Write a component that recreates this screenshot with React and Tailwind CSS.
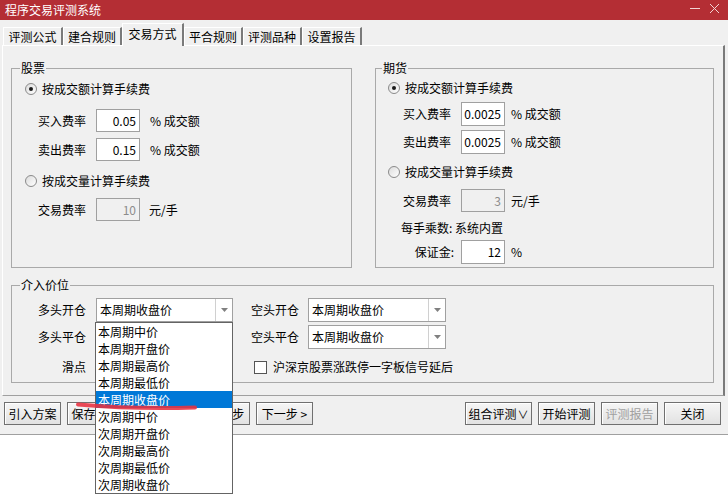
import React from "react";

function Radio({ checked }) {
  return (
    <span className="w-[12px] h-[12px] rounded-full border border-[#8a8a8a] bg-linear-to-br from-[#dcdcdc] to-white flex items-center justify-center shrink-0">
      {checked && <span className="w-[4px] h-[4px] rounded-full bg-[#1a1a1a]" />}
    </span>
  );
}

function Box({ v, disabled, tall }) {
  return (
    <div
      className={
        "w-[44px] border border-[#a0a0a0] flex items-center justify-end pr-[3px] leading-[14px] " +
        (tall ? "h-[24px] " : "h-[23px] ") +
        (disabled ? "bg-[#f0f0f0] text-[#8c8c8c]" : "bg-white text-black")
      }
    >
      {v}
    </div>
  );
}

function FeeRow({ label, value, unit, disabled, tall, mt, left, unitMl }) {
  return (
    <div className={"flex items-center " + mt + " " + left}>
      <span className="w-[58px] leading-[14px]">{label}</span>
      <Box v={value} disabled={disabled} tall={tall} />
      <span className={"leading-[14px] " + unitMl}>{unit}</span>
    </div>
  );
}

function Combo({ w, text }) {
  return (
    <div className={"h-[24px] border border-[#a0a0a0] bg-white flex " + w}>
      <span className="flex-1 pl-[3px] leading-[22px]">{text}</span>
      <span className="w-[17px] border-l border-[#d0d0d0] flex items-center justify-center">
        <svg width="7" height="4" viewBox="0 0 7 4">
          <path d="M0 0 L7 0 L3.5 4 Z" fill="#808080" />
        </svg>
      </span>
    </div>
  );
}

function Btn({ children, w, ml, disabled }) {
  return (
    <div
      className={
        "h-[23px] border border-[#707070] bg-linear-to-b from-[#f6f6f6] to-[#e2e2e2] shadow-[inset_1px_1px_0_#fff] flex items-center justify-center leading-[14px] " +
        (w || "w-[57px]") +
        " " +
        (ml || "") +
        " " +
        (disabled ? "text-[#a0a0a0]" : "text-black")
      }
    >
      {children}
    </div>
  );
}

const tabs = [
  { t: "评测公式", w: "w-[60px]" },
  { t: "建合规则", w: "w-[59px]" },
  { t: "交易方式", w: "w-[62px]", sel: true },
  { t: "平合规则", w: "w-[59px]" },
  { t: "评测品种", w: "w-[59px]" },
  { t: "设置报告", w: "w-[60px]" },
];

const items = [
  "本周期中价",
  "本周期开盘价",
  "本周期最高价",
  "本周期最低价",
  "本周期收盘价",
  "次周期中价",
  "次周期开盘价",
  "次周期最高价",
  "次周期最低价",
  "次周期收盘价",
];

export default function App() {
  return (
    <div className="w-[728px] h-[500px] bg-white relative overflow-hidden font-['Noto_Sans_CJK_SC','Noto_Sans',sans-serif] text-[12px] text-black">
      <div className="h-[435px] bg-[#f0f0f0] border-b border-[#a0a0a0] flex flex-col">
        {/* Title bar */}
        <div className="h-[20px] bg-[#b42e34] flex items-center shrink-0">
          <span className="pl-[5px] text-white leading-[20px]">程序交易评测系统</span>
          <div className="flex-1" />
          <svg width="34" height="20" viewBox="0 0 34 20" className="mr-[4px]">
            <path d="M0 8.5 H10" stroke="#f2d4d4" strokeWidth="1" />
            <path d="M20 4 L29 13 M29 4 L20 13" stroke="#f2d4d4" strokeWidth="1" />
          </svg>
        </div>

        {/* Tabs */}
        <div className="h-[25px] flex items-end pl-[3px] shrink-0">
          {tabs.map((tb) =>
            tb.sel ? (
              <div
                key={tb.t}
                className={
                  "h-[23px] -mb-[1px] relative z-10 bg-[#f0f0f0] border-t border-l border-white border-r-2 border-r-[#7a7a7a] flex justify-center pt-[2px] leading-[16px] " +
                  tb.w
                }
              >
                {tb.t}
              </div>
            ) : (
              <div
                key={tb.t}
                className={
                  "h-[18px] bg-[#f0f0f0] border-t border-l border-white border-r-2 border-r-[#7a7a7a] flex justify-center items-center leading-[16px] " +
                  tb.w
                }
              >
                {tb.t}
              </div>
            )
          )}
        </div>

        {/* Panel */}
        <div className="ml-[2px] w-[723px] h-[351px] shrink-0 border-t border-l border-t-white border-l-white border-r-2 border-r-[#7a7a7a] border-b border-b-[#a0a0a0] pl-[8px] pt-[15px] flex flex-col">
          <div className="flex gap-[23px]">
            {/* Stock */}
            <fieldset className="w-[341px] h-[207px] border border-[#a9a9a9] flex flex-col">
              <legend className="ml-[8px] px-[1px] leading-[14px]">股票</legend>
              <div className="flex items-center h-[16px] mt-[6px] ml-[13px]">
                <Radio checked />
                <span className="ml-[5px] leading-[16px]">按成交额计算手续费</span>
              </div>
              <FeeRow label="买入费率" value="0.05" unit="% 成交额" mt="mt-[12px]" left="ml-[26px]" unitMl="ml-[10px]" />
              <FeeRow label="卖出费率" value="0.15" unit="% 成交额" mt="mt-[6px]" left="ml-[26px]" unitMl="ml-[10px]" />
              <div className="flex items-center h-[16px] mt-[12px] ml-[13px]">
                <Radio />
                <span className="ml-[5px] leading-[16px]">按成交量计算手续费</span>
              </div>
              <FeeRow label="交易费率" value="10" unit="元/手" disabled mt="mt-[9px]" left="ml-[26px]" unitMl="ml-[9px]" />
            </fieldset>

            {/* Futures */}
            <fieldset className="w-[339px] h-[207px] border border-[#a9a9a9] flex flex-col">
              <legend className="ml-[6px] px-[1px] leading-[14px]">期货</legend>
              <div className="flex items-center h-[16px] mt-[5px] ml-[12px]">
                <Radio checked />
                <span className="ml-[5px] leading-[16px]">按成交额计算手续费</span>
              </div>
              <FeeRow label="买入费率" value="0.0025" unit="% 成交额" tall mt="mt-[6px]" left="ml-[27px]" unitMl="ml-[6px]" />
              <FeeRow label="卖出费率" value="0.0025" unit="% 成交额" tall mt="mt-[4px]" left="ml-[27px]" unitMl="ml-[6px]" />
              <div className="flex items-center h-[16px] mt-[10px] ml-[12px]">
                <Radio />
                <span className="ml-[5px] leading-[16px]">按成交量计算手续费</span>
              </div>
              <FeeRow label="交易费率" value="3" unit="元/手" disabled mt="mt-[9px]" left="ml-[27px]" unitMl="ml-[6px]" />
              <div className="mt-[9px] ml-[25px] leading-[14px]">每手乘数: 系统内置</div>
              <div className="flex items-center mt-[5px] ml-[27px]">
                <span className="w-[58px] text-right pr-[7px] leading-[14px]">保证金:</span>
                <Box v="12" tall />
                <span className="ml-[6px] leading-[14px]">%</span>
              </div>
            </fieldset>
          </div>

          {/* 介入价位 */}
          <fieldset className="mt-[10px] w-[703px] h-[105px] border border-[#a9a9a9] flex flex-col">
            <legend className="ml-[8px] px-[1px] leading-[14px]">介入价位</legend>
            <div className="flex items-center mt-[6px] ml-[26px]">
              <span className="w-[58px] text-right pr-[10px] leading-[14px]">多头开仓</span>
              <Combo w="w-[137px]" text="本周期收盘价" />
              <span className="ml-[18px] w-[57px] text-right pr-[9px] leading-[14px]">空头开仓</span>
              <Combo w="w-[138px]" text="本周期收盘价" />
            </div>
            <div className="flex items-center mt-[3px] ml-[26px]">
              <span className="w-[58px] text-right pr-[10px] leading-[14px]">多头平仓</span>
              <Combo w="w-[137px]" text="" />
              <span className="ml-[18px] w-[57px] text-right pr-[9px] leading-[14px]">空头平仓</span>
              <Combo w="w-[138px]" text="本周期收盘价" />
            </div>
            <div className="flex items-center h-[16px] mt-[10px] ml-[26px]">
              <span className="w-[58px] text-right pr-[10px] leading-[14px]">滑点</span>
              <div className="w-[44px] h-[22px] border border-[#a0a0a0] bg-white" />
              <div className="w-[93px]" />
              <span className="ml-[21px] w-[13px] h-[13px] border border-[#555] bg-white" />
              <span className="ml-[6px] leading-[14px]">沪深京股票涨跌停一字板信号延后</span>
            </div>
          </fieldset>
        </div>

        {/* Buttons */}
        <div className="flex items-start pt-[6px] pl-[4px] pr-[7px] flex-1">
          <Btn>引入方案</Btn>
          <Btn ml="ml-[6px]">保存方案</Btn>
          <Btn ml="ml-[6px]"></Btn>
          <Btn ml="ml-[6px]">&lt; 上一步</Btn>
          <Btn ml="ml-[6px]">下一步 &gt;</Btn>
          <div className="flex-1" />
          <Btn w="w-[67px]">
            组合评测<span className="text-[11px] ml-[1px]">∨</span>
          </Btn>
          <Btn ml="ml-[6px]">开始评测</Btn>
          <Btn ml="ml-[6px]" disabled>评测报告</Btn>
          <Btn ml="ml-[6px]">关闭</Btn>
        </div>
      </div>

      {/* Dropdown list */}
      <div className="absolute left-[95px] top-[322px] w-[138px] border border-[#646464] bg-white z-20">
        {items.map((it, i) =>
          i === 4 ? (
            <div key={it} className="h-[17px] leading-[17px] pl-[2px] bg-[#0078d7] text-white">
              {it}
            </div>
          ) : (
            <div key={it} className="h-[17px] leading-[17px] pl-[2px]">
              {it}
            </div>
          )
        )}
      </div>

      {/* Red annotation stroke */}
      <svg className="absolute left-0 top-0 pointer-events-none z-30" width="728" height="500" viewBox="0 0 728 500">
        <path d="M78 404.5 Q135 409.5 195 407.5" stroke="#e8303f" strokeOpacity="0.88" strokeWidth="4" strokeLinecap="round" fill="none" />
      </svg>
    </div>
  );
}
